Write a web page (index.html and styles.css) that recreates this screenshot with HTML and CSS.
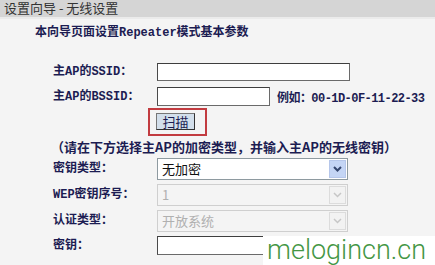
FILE: index.html
```html
<!DOCTYPE html>
<html lang="zh-CN">
<head>
    <meta charset="UTF-8">
    <title>设置向导 - 无线设置</title>
    <link rel="stylesheet" href="styles.css">
</head>
<body>
    <div class="title-bar">设置向导 - 无线设置</div>
    <div class="page">
        <p class="intro">本向导页面设置Repeater模式基本参数</p>
        <form class="fields">
            <div class="row row-ssid">
                <label class="label" for="ssid">主AP的SSID：</label>
                <input type="text" id="ssid" class="text-input wide">
            </div>
            <div class="row row-bssid">
                <label class="label" for="bssid">主AP的BSSID：</label>
                <input type="text" id="bssid" class="text-input short">
                <span class="hint">例如：00-1D-0F-11-22-33</span>
            </div>
            <div class="row row-scan">
                <div class="scan-box">
                    <button type="button" class="scan-btn">扫描</button>
                </div>
            </div>
            <p class="note">（请在下方选择主AP的加密类型，并输入主AP的无线密钥）</p>
            <div class="row row-select first">
                <label class="label" for="keyType">密钥类型：</label>
                <div class="select">
                    <span class="select-text">无加密</span>
                    <span class="select-arrow">
                        <svg width="9" height="6" viewBox="0 0 9 6"><path d="M1 1 L4.5 4.5 L8 1" fill="none" stroke="currentColor" stroke-width="2"/></svg>
                    </span>
                </div>
            </div>
            <div class="row row-select">
                <label class="label">WEP密钥序号：</label>
                <div class="select disabled">
                    <span class="select-text">1</span>
                    <span class="select-arrow">
                        <svg width="9" height="6" viewBox="0 0 9 6"><path d="M1 1 L4.5 4.5 L8 1" fill="none" stroke="currentColor" stroke-width="1.5"/></svg>
                    </span>
                </div>
            </div>
            <div class="row row-select">
                <label class="label">认证类型：</label>
                <div class="select disabled">
                    <span class="select-text">开放系统</span>
                    <span class="select-arrow">
                        <svg width="9" height="6" viewBox="0 0 9 6"><path d="M1 1 L4.5 4.5 L8 1" fill="none" stroke="currentColor" stroke-width="1.5"/></svg>
                    </span>
                </div>
            </div>
            <div class="row row-key">
                <label class="label" for="key">密钥：</label>
                <input type="text" id="key" class="text-input wide">
            </div>
        </form>
    </div>
    <div class="watermark">melogincn.cn</div>
</body>
</html>
```
FILE: styles.css
```css
body {
    margin: 0;
    background: #f4f4f4;
    font-family: "Liberation Mono", "Noto Sans CJK SC", monospace;
    font-size: 12px;
    color: #1c1c52;
    overflow: hidden;
}
.title-bar {
    height: 19px;
    line-height: 15px;
    padding: 0 4px;
    background: #d5d5d5;
    border-bottom: 2px solid #ebebeb;
    box-sizing: border-box;
    font-family: "Noto Sans CJK SC", sans-serif;
    font-size: 13px;
    color: #333;
    overflow: hidden;
}
.page {
    position: relative;
}
.intro {
    margin: 7px 0 0 35px;
    height: 14px;
    line-height: 14px;
    font-weight: bold;
    white-space: nowrap;
}
.fields {
    margin: 0 0 0 53px;
}
.row {
    display: flex;
    align-items: center;
}
.label {
    width: 104px;
    flex-shrink: 0;
    line-height: 14px;
    font-weight: bold;
    white-space: nowrap;
}
.row-ssid {
    margin-top: 23px;
    height: 18px;
}
.row-bssid {
    margin-top: 6px;
    height: 19px;
}
.row-scan {
    margin-top: 2px;
    height: 28px;
    padding-left: 95px;
}
.row-select {
    margin-top: 4px;
    height: 22px;
}
.row-select.first {
    margin-top: 3px;
}
.row-key {
    margin-top: 4px;
    height: 19px;
}
.text-input {
    height: 100%;
    box-sizing: border-box;
    border: 1px solid #6a6a6a;
    border-top-color: #3e3e3e;
    border-left-color: #4a4a4a;
    background: #fff;
    padding: 0 3px;
    margin: 0;
}
.text-input.wide {
    width: 193px;
}
.text-input.short {
    width: 113px;
}
.hint {
    margin-left: 7px;
    white-space: nowrap;
    font-weight: bold;
    letter-spacing: -0.55px;
}
.scan-box {
    width: 59px;
    height: 28px;
    box-sizing: border-box;
    border: 2px solid #c23b40;
    padding: 3px 0 0 6px;
}
.scan-btn {
    display: block;
    width: 39px;
    height: 17px;
    padding: 0;
    margin: 0;
    background: #d3dfeb;
    border: 1px solid #333;
    border-top-color: #777;
    border-left-color: #777;
    font-family: "Noto Sans CJK SC", sans-serif;
    font-size: 13px;
    line-height: 15px;
    color: #1c1c52;
}
.note {
    margin: 3px 0 0 -2px;
    height: 16px;
    line-height: 16px;
    font-family: "Noto Sans CJK SC", sans-serif;
    font-size: 13px;
    font-weight: bold;
    white-space: nowrap;
}
.select {
    display: flex;
    align-items: stretch;
    width: 191px;
    height: 100%;
    box-sizing: border-box;
    border: 1px solid #8e9aa0;
    background: #fff;
    padding: 1px;
}
.select-text {
    flex: 1;
    padding-left: 3px;
    font-family: "Noto Sans CJK SC", sans-serif;
    font-size: 13px;
    line-height: 18px;
    color: #111;
}
.select-arrow {
    width: 15px;
    display: flex;
    align-items: center;
    justify-content: center;
    background: #c4d5f5;
    border: 1px solid #b5c6ea;
    color: #34466e;
}
.select.disabled {
    border-color: #cfcfcf;
    background: #f4f4f4;
}
.select.disabled .select-text {
    color: #b0b0b0;
}
.select.disabled .select-arrow {
    background: #f2f2f2;
    border-color: #dcdcdc;
    color: #c6c6c6;
}
.watermark {
    position: absolute;
    left: 263px;
    top: 236px;
    width: 172px;
    height: 29px;
    background: #fff;
    font-family: Roboto, sans-serif;
    font-weight: 300;
    font-size: 27px;
    line-height: 28px;
    color: #449644;
    padding-left: 4px;
    box-sizing: border-box;
    white-space: nowrap;
    overflow: hidden;
}
```
